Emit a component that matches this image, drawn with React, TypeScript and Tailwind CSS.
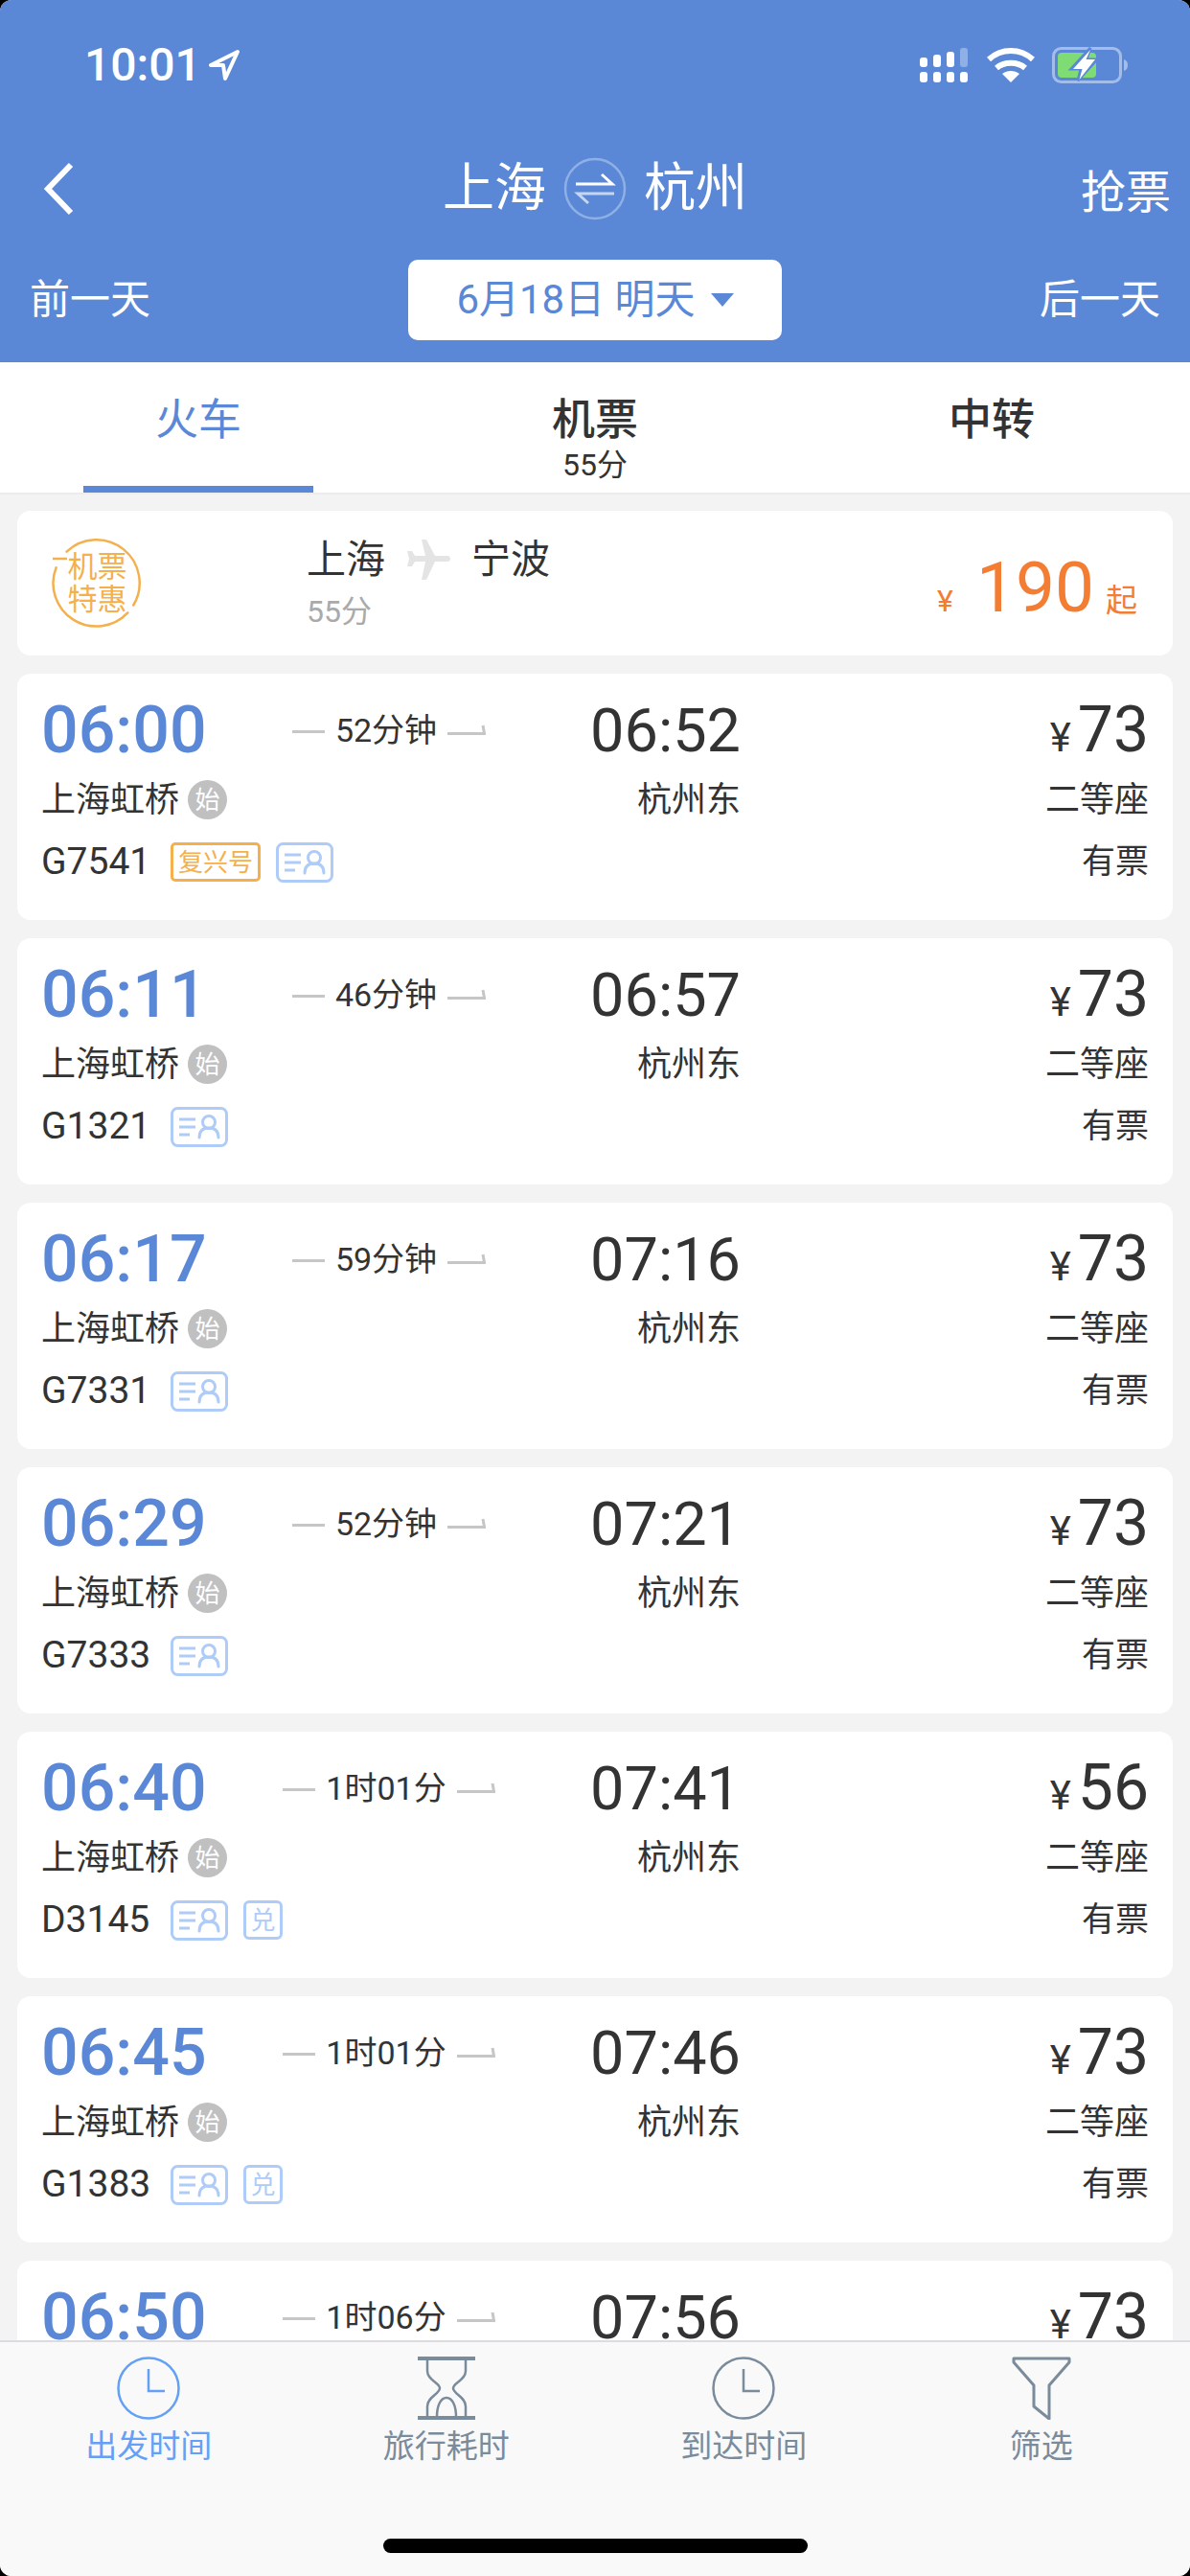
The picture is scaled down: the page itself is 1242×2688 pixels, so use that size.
import React from "react";

interface Train {
  dep: string;
  arr: string;
  duration: string;
  no: string;
  price: string;
  fuxing?: boolean;
  exchange?: boolean;
}

const trains: Train[] = [
  { dep: "06:00", arr: "06:52", duration: "52分钟", no: "G7541", price: "73", fuxing: true },
  { dep: "06:11", arr: "06:57", duration: "46分钟", no: "G1321", price: "73" },
  { dep: "06:17", arr: "07:16", duration: "59分钟", no: "G7331", price: "73" },
  { dep: "06:29", arr: "07:21", duration: "52分钟", no: "G7333", price: "73" },
  { dep: "06:40", arr: "07:41", duration: "1时01分", no: "D3145", price: "56", exchange: true },
  { dep: "06:45", arr: "07:46", duration: "1时01分", no: "G1383", price: "73", exchange: true },
  { dep: "06:50", arr: "07:56", duration: "1时06分", no: "", price: "73" },
];

const IdTag = () => (
  <svg width="60" height="42" viewBox="0 0 60 42" fill="none" stroke="#aeccf7" strokeWidth="3" className="shrink-0">
    <rect x="1.5" y="1.5" width="57" height="39" rx="6" />
    <path d="M9 13h17M9 21h17M9 29h11" />
    <circle cx="40" cy="16" r="6.5" />
    <path d="M30 32c0-7 4-10 10-10s10 3 10 10" strokeLinecap="round" />
  </svg>
);

const ClockIcon = ({ color }: { color: string }) => (
  <svg width="66" height="66" viewBox="0 0 66 66" fill="none" stroke={color} strokeWidth="2.5">
    <circle cx="33" cy="33" r="31.5" />
    <path d="M33 13v23h17" />
  </svg>
);

const Duration = ({ text }: { text: string }) => (
  <div className="flex items-center justify-center gap-[11px]">
    <div className="w-[34px] h-[3px] bg-[#c6c6c6] mt-[2px]" />
    <span className="text-[34px] leading-none text-[#333]">{text}</span>
    <svg width="40" height="14" viewBox="0 0 40 14" fill="none" stroke="#c6c6c6" strokeWidth="3" className="mt-[-2px]">
      <path d="M0 11.5h38.5L37 3" />
    </svg>
  </div>
);

const TrainCard = ({ t }: { t: Train }) => (
  <div className="shrink-0 h-[257px] bg-white rounded-[14px] px-[25px] pt-[25px] grid grid-cols-[501px_229px_1fr] grid-rows-[68px_77px_53px] items-center text-[#333]">
    <div className="flex items-center">
      <span className="w-[225px] text-[68px] leading-none font-medium text-[#5a88d6]">{t.dep}</span>
      <div className="w-[276px]">
        <Duration text={t.duration} />
      </div>
    </div>
    <div className="text-right text-[63px] leading-none">{t.arr}</div>
    <div className="text-right text-[66px] leading-none">
      <span className="text-[42px] mr-[7px]">¥</span>
      {t.price}
    </div>

    <div className="flex items-center gap-[9px]">
      <span className="text-[36px] leading-none">上海虹桥</span>
      <span className="w-[41px] h-[41px] rounded-full bg-[#c0c0c0] text-white text-[26px] leading-none flex items-center justify-center">
        始
      </span>
    </div>
    <div className="text-right text-[36px] leading-none">杭州东</div>
    <div className="text-right text-[36px] leading-none">二等座</div>

    <div className="flex items-center gap-[16px]">
      <span className="w-[119px] text-[39px] leading-none">{t.no}</span>
      {t.fuxing && (
        <span className="h-[41px] w-[94px] border-[3px] border-[#f5b04e] rounded-[5px] text-[#f5b04e] text-[26px] leading-none flex items-center justify-center">
          复兴号
        </span>
      )}
      <IdTag />
      {t.exchange && (
        <span className="h-[41px] w-[41px] border-[3px] border-[#aeccf7] rounded-[6px] text-[#aeccf7] text-[26px] leading-none flex items-center justify-center">
          兑
        </span>
      )}
    </div>
    <div />
    <div className="text-right text-[35px] leading-none">有票</div>
  </div>
);

const BottomItem = ({ label, active, icon }: { label: string; active?: boolean; icon: React.ReactNode }) => (
  <div className="flex flex-col items-center w-[311px]">
    <div className="h-[66px] flex items-center justify-center">{icon}</div>
    <span className={`mt-[11px] text-[33px] leading-none ${active ? "text-[#64a0f5]" : "text-[#7a8c9c]"}`}>{label}</span>
  </div>
);

const PromoBadge = () => (
  <div className="ml-[36px] w-[93px] h-[93px] relative flex items-center justify-center text-[#f5b04e] text-[31px] leading-[34px] text-center">
    <svg width="93" height="93" viewBox="0 0 93 93" fill="none" stroke="#f5b04e" strokeWidth="2.5" className="absolute left-0 top-0">
      <path d="M15.600 13.700A45 45 0 0 1 85.200 69.500" strokeLinecap="round" />
      <path d="M79.300 77.400A45 45 0 0 1 4.600 30.200" strokeLinecap="round" />
      <path d="M1 21h15" />
    </svg>
    <span className="relative ml-[2px]">
      机票
      <br />
      特惠
    </span>
  </div>
);

export default function App() {
  return (
    <div className="w-[1242px] h-[2688px] bg-black">
      <div className="w-full h-full rounded-[12px] flex flex-col overflow-hidden bg-[#f3f3f3] font-['Roboto','Noto_Sans_CJK_SC',sans-serif]">
        {/* header */}
        <div className="h-[378px] shrink-0 bg-[#5a88d6] text-white flex flex-col">
          <div className="h-[136px] px-[88px] pr-[64px] pt-[46px] flex justify-between items-start">
            <div className="flex items-center gap-[6px]">
              <span className="text-[48px] leading-[44px] font-medium">10:01</span>
              <svg width="36" height="36" viewBox="0 0 36 36" fill="none" stroke="#fff" strokeWidth="4">
                <path d="M32 4 4 18h13l2 14z" strokeLinejoin="round" />
              </svg>
            </div>
            <div className="flex items-center gap-[18px] pt-[3px]">
              <svg width="52" height="36" viewBox="0 0 52 36" fill="#fff">
                <rect x="0" y="10" width="8" height="10" rx="3" />
                <rect x="14" y="7" width="8" height="13" rx="3" />
                <rect x="28" y="4" width="8" height="16" rx="3" />
                <rect x="42" y="0" width="8" height="20" rx="3" fill="#8fb0e6" />
                <rect x="0" y="25" width="8" height="11" rx="3" />
                <rect x="14" y="25" width="8" height="11" rx="3" />
                <rect x="28" y="25" width="8" height="11" rx="3" />
                <rect x="42" y="25" width="8" height="11" rx="3" />
              </svg>
              <svg width="50" height="36" viewBox="0 0 50 36" fill="none" stroke="#fff" strokeWidth="6">
                <path d="M2 12c13-12 33-12 46 0" />
                <path d="M10 21c8-7 22-7 30 0" />
                <path d="M25 36 16 27c5-4 13-4 18 0z" fill="#fff" stroke="none" />
              </svg>
              <svg width="80" height="38" viewBox="0 0 80 38" fill="none">
                <rect x="1.5" y="1.5" width="70" height="35" rx="8" stroke="#a3bdea" strokeWidth="3" />
                <rect x="6" y="6" width="40" height="26" rx="4" fill="#7fdb74" />
                <path d="M75 13c3 1 4 3 4 6s-1 5-4 6z" fill="#a3bdea" />
                <path d="M40 1 20 23h10l-3 12 20-22H36z" fill="#5a88d6" stroke="#5a88d6" strokeWidth="3" />
                <path d="M40 3 22 23h9.500l-3 11L45 13H35.500z" fill="#fff" />
              </svg>
            </div>
          </div>

          <div className="h-[135px] relative flex items-center justify-center pb-[13px]">
            <svg width="34" height="56" viewBox="0 0 34 56" fill="none" stroke="#fff" strokeWidth="6" className="absolute left-[44px] top-[33px]">
              <path d="M30 3 6 28l24 25" />
            </svg>
            <div className="flex items-center">
              <span className="text-[54px] leading-none">上海</span>
              <svg width="66" height="66" viewBox="0 0 66 66" fill="none" stroke="#fff" className="mx-[18px]">
                <circle cx="33" cy="33" r="31" stroke="#8fb0e6" strokeWidth="2.5" />
                <path d="M13 28h38l-11-10" stroke="#fff" strokeWidth="3" />
                <path d="M53 38H15l11 10" stroke="#c5d6f2" strokeWidth="3" />
              </svg>
              <span className="text-[54px] leading-none">杭州</span>
            </div>
            <span className="absolute right-[20px] top-[41px] text-[47px] leading-none">抢票</span>
          </div>

          <div className="flex items-center justify-between px-[31px]">
            <span className="text-[42px] leading-none">前一天</span>
            <div className="w-[390px] h-[84px] bg-white rounded-[10px] flex items-center justify-center text-[#5a88d6] text-[42px] leading-none">
              6月18日 明天
              <span className="ml-[16px] w-0 h-0 border-x-[12px] border-x-transparent border-t-[14px] border-t-[#5a88d6]" />
            </div>
            <span className="text-[42px] leading-none">后一天</span>
          </div>
        </div>

        {/* tabs */}
        <div className="h-[138px] shrink-0 bg-white border-b-[2px] border-[#ececec] flex relative text-[#333]">
          <div className="w-[414px] flex justify-center pt-[38px]">
            <span className="text-[45px] leading-none text-[#5a88d6]">火车</span>
          </div>
          <div className="w-[414px] flex flex-col items-center pt-[38px]">
            <span className="text-[45px] leading-none font-medium">机票</span>
            <span className="text-[32px] leading-none mt-[8px]">55分</span>
          </div>
          <div className="w-[414px] flex justify-center pt-[38px]">
            <span className="text-[45px] leading-none font-medium">中转</span>
          </div>
          <div className="absolute left-[87px] bottom-0 w-[240px] h-[7px] bg-[#5a88d6]" />
        </div>

        {/* list */}
        <div className="flex-1 min-h-0 overflow-hidden px-[18px] pt-[17px] flex flex-col gap-[19px]">
          <div className="shrink-0 h-[151px] bg-white rounded-[14px] flex items-center relative text-[#333]">
            <PromoBadge />
            <div className="ml-[173px] flex flex-col">
              <div className="flex items-center">
                <span className="text-[41px] leading-none">上海</span>
                <svg width="46" height="42" viewBox="0 0 46 42" fill="#e4e4e4" className="mx-[22px]">
                  <path d="M16 0h5l9 17h13c4 0 4 6 0 6H30l-9 19h-5l4-19H9l-3 5H1l2-8-2-8h5l3 5h11z" />
                </svg>
                <span className="text-[41px] leading-none">宁波</span>
              </div>
              <span className="text-[32px] leading-none mt-[17px] text-[#aaa]">55分</span>
            </div>
            <div className="ml-auto mr-[37px] flex items-baseline text-[#f27d33] pt-[10px]">
              <span className="text-[32px] leading-none mr-[24px]">¥</span>
              <span className="text-[73px] leading-none">190</span>
              <span className="text-[33px] leading-none ml-[12px]">起</span>
            </div>
          </div>
          {trains.map((t) => (
            <TrainCard key={t.dep} t={t} />
          ))}
        </div>

        {/* bottom bar */}
        <div className="h-[246px] shrink-0 bg-[#f9f9f9] border-t-[2px] border-[#dcdce0] flex flex-col">
          <div className="flex pt-[15px]">
            <BottomItem label="出发时间" active icon={<ClockIcon color="#64a0f5" />} />
            <BottomItem
              label="旅行耗时"
              icon={
                <svg width="62" height="66" viewBox="0 0 62 66" fill="none" stroke="#7a8c9c" strokeWidth="2.5">
                  <path d="M1 2h60M1 64h60" strokeWidth="4" />
                  <path d="M11 3v12c0 10 13 12 13 18S11 42 11 52v11M51 3v12c0 10-13 12-13 18s13 9 13 19v11" />
                  <path d="M21 63c0-12 4-20 10-20s10 8 10 20" />
                </svg>
              }
            />
            <BottomItem label="到达时间" icon={<ClockIcon color="#7a8c9c" />} />
            <BottomItem
              label="筛选"
              icon={
                <svg width="62" height="66" viewBox="0 0 62 66" fill="none" stroke="#7a8c9c" strokeWidth="3">
                  <path d="M2 2h58v4L39 30v35L23 52V30L2 6z" strokeLinejoin="round" />
                </svg>
              }
            />
          </div>
          <div className="mt-auto mb-[24px] mx-auto w-[443px] h-[15px] rounded-full bg-black" />
        </div>
      </div>
    </div>
  );
}
